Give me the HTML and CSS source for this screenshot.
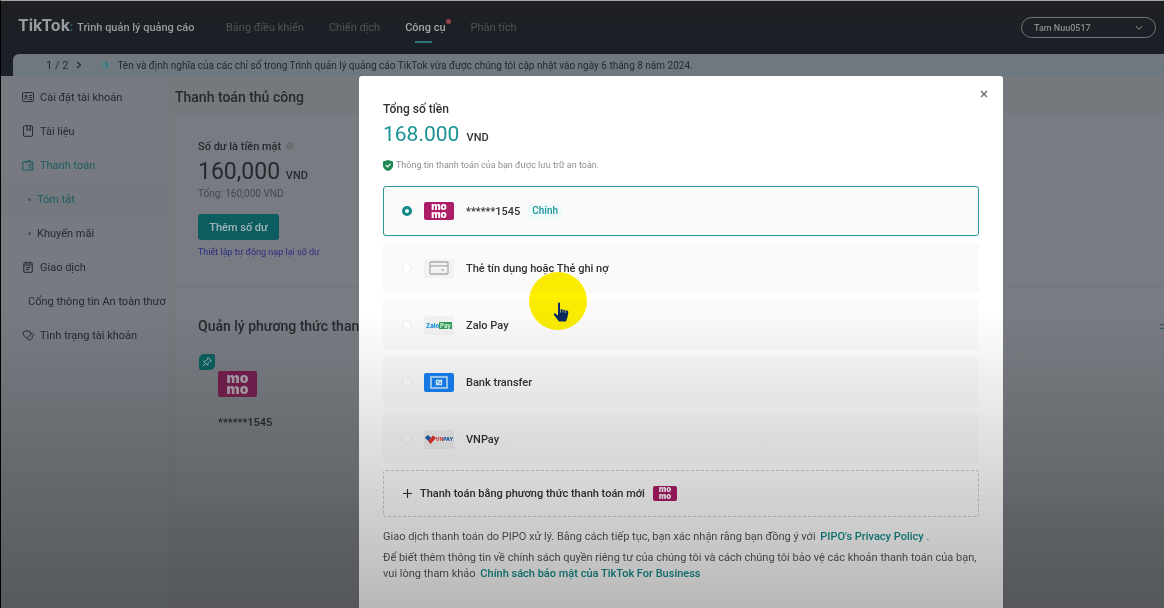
FILE: index.html
```html
<!DOCTYPE html>
<html lang="vi">
<head>
<meta charset="utf-8">
<meta name="viewport" content="width=device-width, initial-scale=1">
<title>TikTok: Trình quản lý quảng cáo</title>
<link rel="stylesheet" href="styles.css">
</head>
<body>
<div class="page">
  <header class="topbar">
    <div class="brand"><span class="brand-name">TikTok</span><span class="brand-colon">:</span><span class="brand-sub">Trình quản lý quảng cáo</span></div>
    <nav class="topnav">
      <a href="#">Bảng điều khiển</a>
      <a href="#">Chiến dịch</a>
      <a href="#" class="current">Công cụ<i class="dot"></i></a>
      <a href="#">Phân tích</a>
    </nav>
    <button class="account" type="button"><span>Tam Nuu0517</span>
      <svg width="8" height="6" viewBox="0 0 8 6"><path d="M1 1l3 3.500L7 1" fill="none" stroke="currentColor"/></svg>
    </button>
  </header>
  <div class="notice-wrap">
    <div class="notice">
      <span class="pager">1 / 2</span>
      <svg class="pager-next" width="6" height="8" viewBox="0 0 6 8"><path d="M1 1l3.500 3L1 7" fill="none" stroke="currentColor" stroke-width="1.200"/></svg>
      <span class="info">i</span>
      <span>Tên và định nghĩa của các chỉ số trong Trình quản lý quảng cáo TikTok vừa được chúng tôi cập nhật vào ngày 6 tháng 8 năm 2024.</span>
    </div>
  </div>
  <div class="body">
    <aside class="sidebar">
      <a href="#"><svg width="12" height="12" viewBox="0 0 12 12"><rect x=".6" y="1.600" width="10.800" height="9" rx="1"/><path d="M2.500 8.500c0-2 3-2 3 0M7 4.500h3M7 6.500h3M7 8.500h3"/><circle cx="4" cy="5" r="1"/></svg>Cài đặt tài khoản</a>
      <a href="#"><svg width="12" height="12" viewBox="0 0 12 12"><rect x="1.500" y=".8" width="9" height="10.500" rx="1"/><path d="M5 1v4.500l1.700-1.200 1.700 1.200V1M1.500 8.800h1"/></svg>Tài liệu</a>
      <a href="#" class="active"><svg width="12" height="12" viewBox="0 0 12 12"><path d="M3 3H.8v8h10V3H8V1L3 3h5M11 5.300H8.500a1.800 1.800 0 0 0 0 3.600H11M8.500 7h.8"/></svg>Thanh toán</a>
      <a href="#" class="sub active selected">Tóm tắt</a>
      <a href="#" class="sub">Khuyến mãi</a>
      <a href="#"><svg width="12" height="12" viewBox="0 0 12 12"><rect x="1.800" y="1.800" width="8.500" height="9.500" rx="1"/><path d="M4 .5v2.500M8 .5v2.500M2 4h8M4 6.300h4.500M4 8.500h3"/></svg>Giao dịch</a>
      <a href="#" class="plain">Cổng thông tin An toàn thươ</a>
      <a href="#"><svg width="12" height="12" viewBox="0 0 12 12"><path d="M5 9.500L1.500 6A2.600 2.600 0 0 1 5 2.300 2.600 2.600 0 0 1 8.700 5.500L5 9.500M8.700 5.300a1.500 1.500 0 1 1 1.500 2.200c.3 2-1 3.500-3.200 3.500L5.500 9.500"/></svg>Tình trạng tài khoản</a>
    </aside>
    <main class="content">
      <h1>Thanh toán thủ công</h1>
      <section class="card balance">
        <div class="label">Số dư là tiền mặt <i class="hint"></i></div>
        <div class="money">160,000 <small>VND</small></div>
        <div class="total">Tổng: 160,000 VND</div>
        <button class="primary" type="button">Thêm số dư</button>
        <a class="auto" href="#">Thiết lập tự động nạp lại số dư</a>
      </section>
      <section class="card methods">
        <div class="methods-head"><h2>Quản lý phương thức thanh toán</h2><i class="more"></i></div>
        <div class="saved">
          <span class="pin"><svg width="16" height="16" viewBox="0 0 16 16"><path d="M9 3.500l3.500 3.500-1.500.3-2 2-.3 2.200L4.500 7.300l2.200-.3 2-2zM6.500 9.500L3.800 12.200" fill="none" stroke="currentColor"/></svg></span>
          <span class="momo momo-l"><b>mo</b><b>mo</b></span>
          <span class="saved-no">******1545</span>
        </div>
      </section>
    </main>
  </div>

  <div class="overlay">
    <div class="modal" role="dialog" aria-labelledby="sum-title">
      <button class="close" type="button" aria-label="Đóng"><svg width="8" height="8" viewBox="0 0 8 8"><path d="M1 1l6 6M7 1L1 7" stroke="currentColor" stroke-width="1.300"/></svg></button>
      <h2 class="sum-title" id="sum-title">Tổng số tiền</h2>
      <div class="sum">168.000 <small>VND</small></div>
      <p class="secure"><svg width="10" height="11" viewBox="0 0 10 11"><path d="M5 0l5 1.500V5.500C10 8.500 7.500 10.300 5 11 2.500 10.300 0 8.500 0 5.500V1.500z" fill="#218a52"/><path d="M2.700 5.200l1.800 1.800 3-3.200" fill="none" stroke="#fff" stroke-width="1.200"/></svg>Thông tin thanh toán của bạn được lưu trữ an toàn.</p>
      <div class="options">
        <label class="option chosen"><input type="radio" name="pay" checked><span class="momo"><b>mo</b><b>mo</b></span><span>******1545</span><span class="tag">Chính</span></label>
        <label class="option"><input type="radio" name="pay"><span class="logo"><svg width="20" height="14" viewBox="0 0 20 14" fill="none" stroke="#aaa" stroke-width="1.300"><rect x="1" y="1" width="18" height="12" rx="1"/><path d="M1 4.800h18M12.500 9h2.500"/></svg></span><span>Thẻ tín dụng hoặc Thẻ ghi nợ</span></label>
        <label class="option"><input type="radio" name="pay"><span class="logo zalo"><b>Zalo</b><em>Pay</em></span><span>Zalo Pay</span></label>
        <label class="option"><input type="radio" name="pay"><span class="logo bank"><svg width="18" height="13" viewBox="0 0 18 13" fill="none" stroke="#d9f0ff" stroke-width="1.400"><rect x="1" y="1" width="16" height="11"/><path d="M6.500 9.500V4.500h4M11.500 3.500v5h-4M7 8.500l4-4"/></svg></span><span>Bank transfer</span></label>
        <label class="option"><input type="radio" name="pay"><span class="logo vnpay"><svg width="11" height="9" viewBox="0 0 11 9"><path d="M0 3l2.500-3L6 2.500 3.500 6z" fill="#1b5fae"/><path d="M3 6l5-5.500L11 3 5.500 9z" fill="#e5322d"/></svg><b>VN</b><em>PAY</em></span><span>VNPay</span></label>
      </div>
      <button class="add" type="button"><svg width="9" height="9" viewBox="0 0 9 9"><path d="M4.500 0v9M0 4.500h9" stroke="currentColor" stroke-width="1.200"/></svg><span>Thanh toán bằng phương thức thanh toán mới</span><span class="momo momo-s"><b>mo</b><b>mo</b></span></button>
      <div class="legal">
        <p>Giao dịch thanh toán do PIPO xử lý. Bằng cách tiếp tục, bạn xác nhận rằng bạn đồng ý với <a href="#">PIPO's Privacy Policy</a> .</p>
        <p>Để biết thêm thông tin về chính sách quyền riêng tư của chúng tôi và cách chúng tôi bảo vệ các khoản thanh toán của bạn, vui lòng tham khảo <a href="#">Chính sách bảo mật của TikTok For Business</a></p>
      </div>
    </div>
  </div>
  <div class="shade"></div>
  <div class="pointer"><svg width="16" height="20" viewBox="0 0 16 20"><path d="M5 1.500c0-1.500 2-1.500 2 0V7l7 1.500c1 .3 1.500 1 1.300 2L14.500 15 13 19.500H6L1 13c-.8-1.200.6-2.200 1.600-1.300L5 13.500z" fill="#0c2a63"/><path d="M7.500 7v3.500M10 7.500v3M12.500 8v3" stroke="#d8d26a" stroke-width=".7"/></svg></div>
</div>
</body>
</html>
```
FILE: styles.css
```css
* { box-sizing: border-box; }
body { margin: 0; font-family: Roboto, "Noto Sans", sans-serif; font-size: 11px; color: #26292e; background: #74777d; }
h1, h2, p { margin: 0; }
a { text-decoration: none; color: inherit; }
button { font: inherit; color: inherit; cursor: pointer; }
i, em { font-style: normal; }
.page { position: relative; min-height: 100vh; display: flex; flex-direction: column; overflow: hidden; border-top: 1px solid #a5a5a5; border-left: 1px solid #000; }

.topbar { display: flex; align-items: center; height: 53px; padding: 0 8px 0 17px; background: linear-gradient(#1f2022, #1a1f28); color: #999b9f; }
.brand { display: flex; align-items: baseline; width: 208px; padding-bottom: 5px; font-weight: 500; white-space: nowrap; }
.brand-name { font-family: Inter, sans-serif; font-size: 16px; font-weight: 700; }
.brand-colon { color: #2c7276; margin-right: 4px; font-size: 12px; }
.topnav { display: flex; gap: 25px; flex: 1; color: #505358; }
.topnav a { position: relative; line-height: 30px; white-space: nowrap; }
.topnav .current { color: #a4a6a9; font-weight: 500; }
.current::after { content: ""; position: absolute; left: 10px; bottom: 0; width: 17px; height: 2px; background: #2f7578; }
.dot { position: absolute; top: 6px; right: -5px; width: 5px; height: 5px; border-radius: 50%; background: #934349; }
.account { display: flex; align-items: center; justify-content: space-between; width: 135px; height: 21px; padding: 0 12px; border: 1px solid #73767a; border-radius: 11px; background: none; font-size: 9px; font-weight: 500; color: #8a8c90; }

.notice-wrap { padding-left: 12px; background: #1a1f28; }
.notice { display: flex; align-items: center; height: 22px; padding-left: 33px; border-radius: 6px 0 0 0; background: linear-gradient(#72777d, #6c7980); font-size: 10px; white-space: nowrap; }
.pager { font-size: 11px; }
.pager-next { margin: 0 20px 0 8px; }
.info { width: 8px; margin-right: 7px; border-radius: 50%; background: #558087; color: #18565c; font-size: 7px; line-height: 8px; text-align: center; }

.body { display: flex; flex: 1; }
.sidebar { width: 167px; padding-top: 4px; background: #777b81; overflow: hidden; }
.sidebar a { display: flex; align-items: center; gap: 6px; height: 34px; padding-left: 21px; white-space: nowrap; }
.sidebar svg { fill: none; stroke: currentColor; flex: none; }
.sidebar .active { color: #1c5b60; }
.sidebar .sub { padding-left: 27px; }
.sub::before { content: ""; width: 3px; height: 3px; border-radius: 50%; background: #4d545b; }
.sidebar .selected { background: #73797f; }
.sidebar .plain { padding-left: 27px; }

.content { flex: 1; padding: 10px 0 0 7px; background: #75787d; }
h1 { font-size: 14px; line-height: 22px; font-weight: 500; }
.card { padding-left: 23px; background: #787b81; }
.balance { display: flex; flex-direction: column; align-items: flex-start; margin-top: 6px; height: 172px; padding-top: 25px; }
.label { line-height: 16px; font-weight: 500; }
.hint { display: inline-block; width: 8px; height: 8px; margin-left: 2px; border-radius: 50%; background: #6a6d72; }
.money { font-size: 23px; line-height: 33px; }
.money small, .sum small { font-size: 11px; line-height: 1; font-weight: 500; }
.total { font-size: 10px; line-height: 12px; color: #464950; }
.primary { margin-top: 14px; width: 81px; height: 26px; padding: 0; border: 0; border-radius: 3px; background: #0d5d60; color: #a3b5b7; font-weight: 500; }
.auto { margin-top: 4px; font-size: 9px; line-height: 16px; color: #2b2b83; }
.methods { margin-top: 3px; height: 216px; padding-top: 27px; }
.methods-head { display: flex; align-items: center; justify-content: space-between; }
.methods h2 { font-size: 14px; line-height: 20px; font-weight: 500; }
.more { width: 4px; height: 5px; border: 1px solid #335e63; border-width: 1px 0; }
.saved { position: relative; display: flex; flex-direction: column; align-items: flex-start; padding: 35px 0 0 20px; }
.pin { position: absolute; left: 1px; top: 18px; width: 16px; height: 16px; border-radius: 5px 2px 5px 2px; background: #0e5f5f; color: #8fb3b3; }
.saved-no { margin-top: 18px; line-height: 16px; font-weight: 500; }

.momo { display: flex; flex-direction: column; align-items: center; justify-content: center; width: 30px; height: 18px; padding-bottom: 2px; border-radius: 2px; background: #ae1b67; color: #fff; font: 900 10px/8px Inter, sans-serif; flex: none; }
.momo b { font-weight: 900; }
.momo-l { width: 39px; height: 26px; font-size: 14px; line-height: 11px; background: #751f4e; color: #a99ea8; }
.momo-s { width: 24px; height: 15px; font-size: 8px; line-height: 7px; }

.overlay { position: absolute; inset: 75px 0 0 0; display: flex; padding: 0 161px 0 358px; }
.modal { position: relative; flex: 1; padding: 24px 24px 16px; border-radius: 3px 3px 0 0; background: #fff; color: #303236; }
.close { position: absolute; top: 11px; right: 12px; width: 14px; height: 14px; padding: 0; border: 0; background: none; color: #666; line-height: 0; }
.sum-title { font-size: 12px; line-height: 18px; font-weight: 500; }
.sum { font-size: 21px; line-height: 32px; color: #1b9294; }
.sum small { margin-left: 2px; color: #303236; }
.secure { display: flex; align-items: center; gap: 3px; margin: 7px 0 13px; font-size: 9px; line-height: 16px; color: #8f8f8f; }
.options { display: flex; flex-direction: column; gap: 7px; }
.option { display: flex; align-items: center; height: 50px; padding-left: 18px; border: 1px solid transparent; border-radius: 3px; background: #fafafa; font-weight: 500; }
.option.chosen { border-color: #2b9598; }
.option input { appearance: none; width: 10px; height: 10px; margin: 0 12px 0 0; border: 1px solid #eee; border-radius: 50%; background: #fff; }
.option input:checked { border: 3px solid #118a87; }
.option .momo, .logo { margin-right: 12px; }
.tag { margin-left: 8px; padding: 0 4px; font-size: 10px; line-height: 14px; border-radius: 2px; background: #eef9fa; color: #1a9496; }
.logo { display: flex; align-items: center; justify-content: center; width: 30px; height: 19px; border-radius: 2px; background: #f2f2f2; font-family: Inter, sans-serif; flex: none; }
.zalo { font-size: 6px; color: #1591d8; }
.zalo b { font-weight: 800; }
.zalo em { padding: 0 1px; background: #2f9d58; color: #d6f5df; font-weight: 700; }
.bank { background: #1680f2; }
.vnpay { background: #eee; font-size: 5px; color: #e5322d; }
.vnpay em { color: #1b5fae; font-weight: 800; }
.add { display: flex; align-items: center; gap: 8px; width: 100%; height: 47px; margin-top: 6px; padding: 0 19px; border: 1px dashed #ccc; border-radius: 3px; background: none; font-weight: 500; }
.legal { margin-top: 12px; color: #55575a; line-height: 16px; }
.legal p + p { margin-top: 5px; }
.legal a { margin-left: 2px; color: #128c8a; font-weight: 500; }
.shade { position: absolute; inset: 310px 0 0 0; background: linear-gradient(rgba(0, 0, 0, 0), rgba(0, 0, 0, 0.280)); pointer-events: none; }
.pointer { position: absolute; left: 528px; top: 271px; width: 58px; height: 58px; padding: 30px 0 0 24px; border-radius: 50%; background: #fff000; mix-blend-mode: multiply; pointer-events: none; }
```
